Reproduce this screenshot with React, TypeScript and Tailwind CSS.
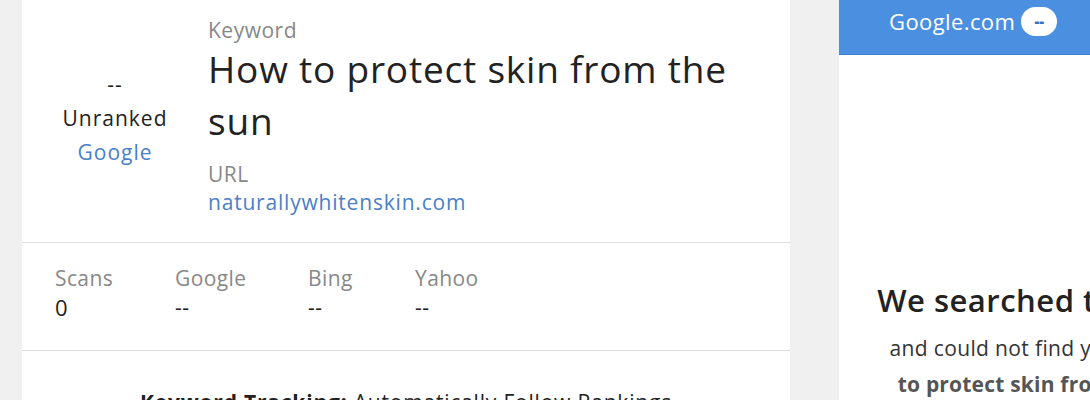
import React from "react";

export default function App() {
  return (
    <div
      className="w-[1090px] h-[400px] overflow-hidden bg-[#f0f0f0] flex"
      style={{ fontFamily: '"Open Sans", "Noto Sans", sans-serif' }}
    >
      <div className="ml-[22px] w-[768px] bg-white flex flex-col shrink-0">
        <div className="flex h-[243px] shrink-0 border-b border-[#dedede]">
          <div className="w-[186px] flex flex-col items-center justify-center text-[21px] leading-[34px] pb-[6px] tracking-[1px]">
            <div className="text-[#222]">--</div>
            <div className="text-[#222] font-medium">Unranked</div>
            <div className="text-[#4a80c8] font-medium">Google</div>
          </div>
          <div className="pt-[17px]">
            <div className="text-[21px] leading-[26px] text-[#888] tracking-[0.5px]">Keyword</div>
            <div className="text-[37px] leading-[52px] text-[#222] tracking-[0.8px] w-[560px]">
              How to protect skin from the sun
            </div>
            <div className="text-[21px] leading-[30px] text-[#888] mt-[12px] tracking-[0.5px]">URL</div>
            <div className="text-[21px] leading-[26px] text-[#4a80c8] tracking-[0.8px]">naturallywhitenskin.com</div>
          </div>
        </div>
        <div className="flex h-[108px] shrink-0 border-b border-[#dedede] pl-[33px] pt-[20px] text-[21px] tracking-[0.4px]">
          <div className="w-[120px]">
            <div className="text-[#888] leading-[30px]">Scans</div>
            <div className="text-[#222] text-[22px] leading-[28px]">0</div>
          </div>
          <div className="w-[133px]">
            <div className="text-[#888] leading-[30px]">Google</div>
            <div className="text-[#222] leading-[28px]">--</div>
          </div>
          <div className="w-[107px]">
            <div className="text-[#888] leading-[30px]">Bing</div>
            <div className="text-[#222] leading-[28px]">--</div>
          </div>
          <div>
            <div className="text-[#888] leading-[30px]">Yahoo</div>
            <div className="text-[#222] leading-[28px]">--</div>
          </div>
        </div>
        <div className="pt-[36px] shrink-0 text-center text-[21px] text-[#222] leading-[30px] tracking-[0.8px]">
          <span className="font-bold">Keyword Tracking:</span> Automatically Follow Rankings
        </div>
      </div>
      <div className="ml-[49px] w-[418px] shrink-0 bg-white flex flex-col">
        <div className="h-[55px] shrink-0 bg-[#4a8fe0] border-b border-[#3f7fcc] flex items-center pl-[50px] pb-[12px]">
          <span className="text-white text-[22px] leading-[30px] tracking-[0.4px]">Google.com</span>
          <span className="ml-[6px] bg-white rounded-full w-[36px] h-[29px] flex items-center justify-center text-[#3a72c0] text-[15px] font-extrabold leading-none">
            --
          </span>
        </div>
        <div className="pt-[220px] text-center">
          <div className="text-[31px] leading-[50px] font-semibold text-[#222] tracking-[0.5px] pr-[12px]">
            We searched the web
          </div>
          <div className="mt-[5px] text-[21px] leading-[36px] text-[#333] tracking-[0.35px]">
            and could not find you for <span className="font-bold text-[#555]">How</span>
          </div>
          <div className="text-[21px] leading-[36px] font-bold text-[#555] tracking-[0.2px]">
            to protect skin from the sun
          </div>
        </div>
      </div>
    </div>
  );
}
